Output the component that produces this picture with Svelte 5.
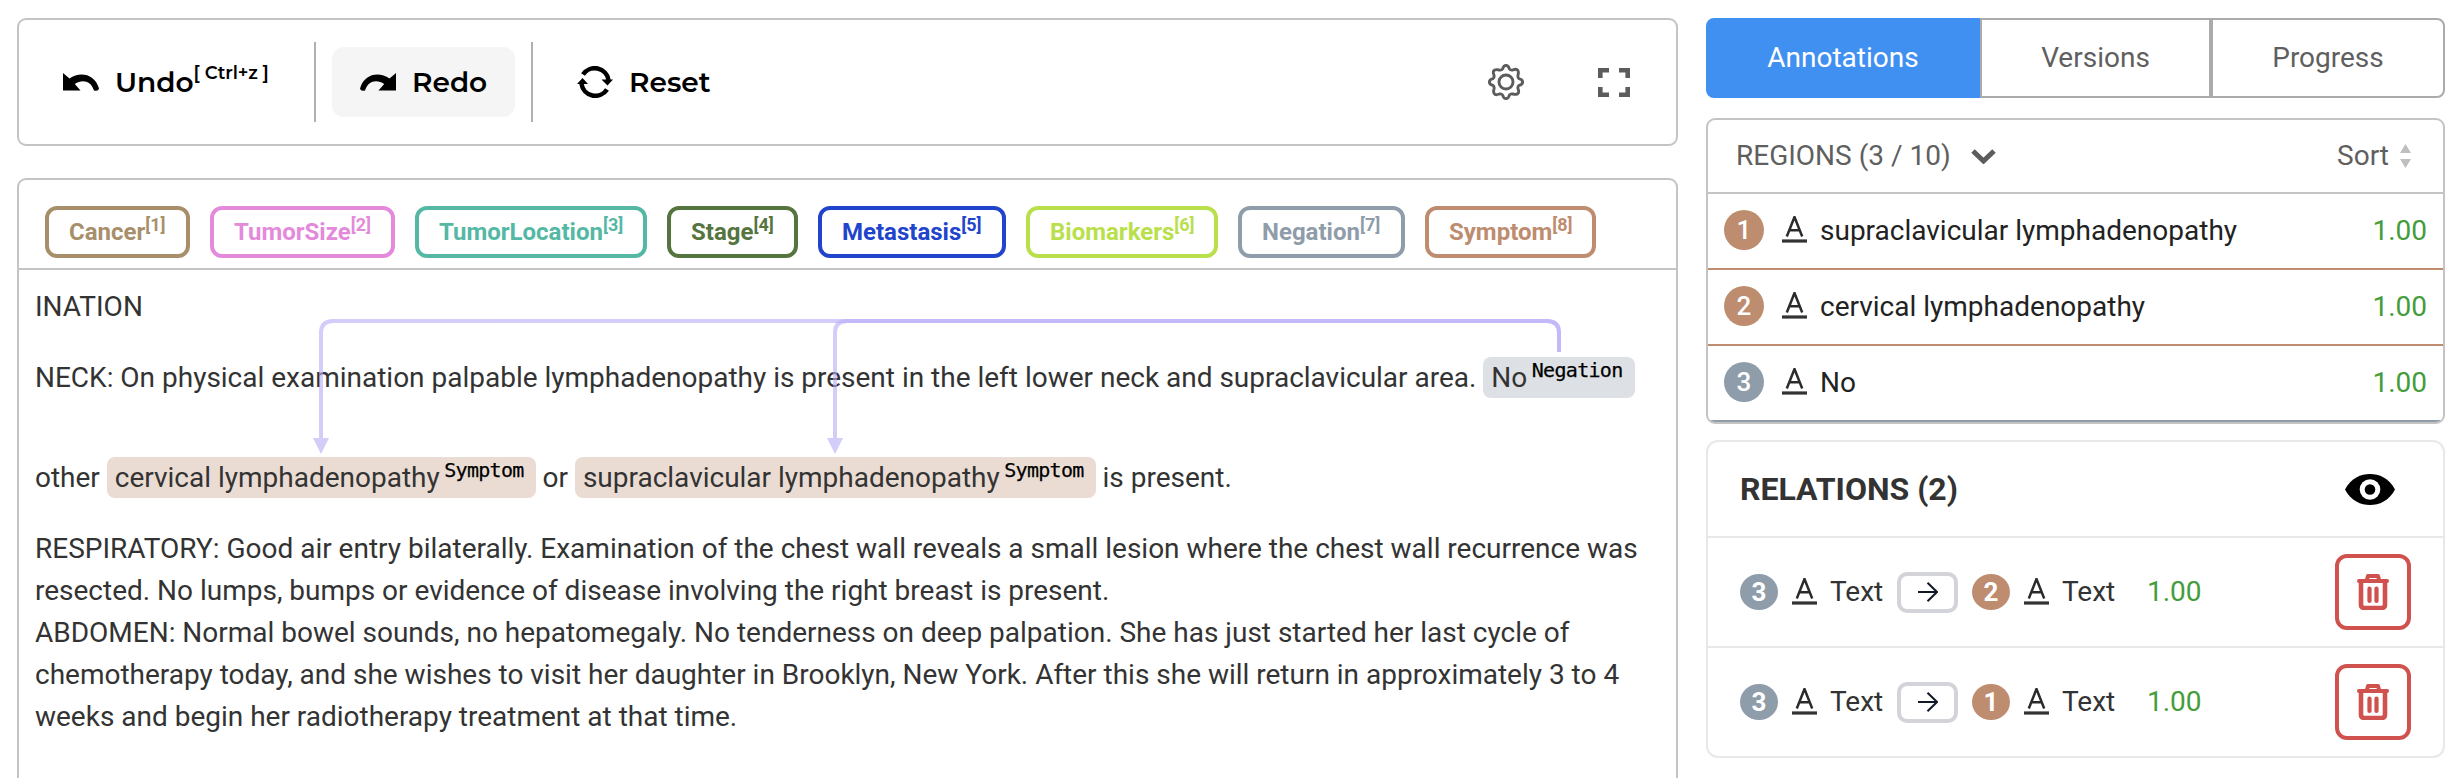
<script>
  const tan = '#be8c6f', slate = '#8f9ca9';
  const labels = [
    { name: 'Cancer', color: '#a88f6c', w: 145 },
    { name: 'TumorSize', color: '#e48adb', w: 185 },
    { name: 'TumorLocation', color: '#54b8a5', w: 232 },
    { name: 'Stage', color: '#557440', w: 131 },
    { name: 'Metastasis', color: '#2144cd', w: 188 },
    { name: 'Biomarkers', color: '#b9df4b', w: 192 },
    { name: 'Negation', color: slate, w: 167 },
    { name: 'Symptom', color: tan, w: 171 }
  ];
  const regions = [
    { text: 'supraclavicular lymphadenopathy', color: tan },
    { text: 'cervical lymphadenopathy', color: tan },
    { text: 'No', color: slate }
  ];
  const relations = [2, 1];
</script>

{#snippet letterA()}
  <svg class="la" width="25" height="28" viewBox="0 0 25 28">
    <path d="M4.8 20.5 L12.5 1 L20.2 20.5 M7.3 14.2 H17.7" fill="none" stroke="#2b2b2b" stroke-width="2.5" />
    <rect x="0" y="23.4" width="25" height="3.2" fill="#333" />
  </svg>
{/snippet}

<div class="page">
  <main>
    <div class="toolbar">
      <div class="tool undo">
        <svg width="36" height="20" viewBox="0 0 36 20"><path d="M0 1 L6.500 6.600 C17 -1 32 2 36 16.500 Q35.500 19.500 31 18.500 C28 8.500 19 6.800 11.800 12 L17.500 18.500 H0 Z" /></svg>
        <span class="tt">Undo</span><span class="key">[ Ctrl+z ]</span>
      </div>
      <div class="tool redo">
        <svg width="36" height="20" viewBox="0 0 36 20"><path transform="translate(36 0) scale(-1 1)" d="M0 1 L6.500 6.600 C17 -1 32 2 36 16.500 Q35.500 19.500 31 18.500 C28 8.500 19 6.800 11.800 12 L17.500 18.500 H0 Z" /></svg>
        <span class="tt">Redo</span>
      </div>
      <div class="tool reset">
        <svg width="36" height="32" viewBox="0 0 36 32">
          <path d="M6 8.500 A14 14 0 0 1 31.500 14 M30 23.500 A14 14 0 0 1 4.500 18" fill="none" stroke="#000" stroke-width="4.600" />
          <path d="M24.500 13.500 H36 L30.500 19.500 Z M0 18 L5.500 12 L11 18 Z" />
        </svg>
        <span class="tt">Reset</span>
      </div>
      <svg class="gear" width="36" height="36" viewBox="0 0 36 36" fill="none" stroke="#5c5c5c" stroke-width="2.900" stroke-linejoin="round">
        <circle cx="18" cy="18" r="7" />
        <path d="M14.600 5 Q15.500 1.400 18 1.400 T21.400 5 Q22.500 6.500 24.800 6 Q28.500 4.500 29.700 6.300 T30 11.200 Q29.500 13.500 31 14.600 Q34.600 15.500 34.600 18 T31 21.400 Q29.500 22.500 30 24.800 Q31.500 28.500 29.700 29.700 T24.800 30 Q22.500 29.500 21.400 31 Q20.500 34.600 18 34.600 T14.600 31 Q13.500 29.500 11.200 30 Q7.500 31.500 6.300 29.700 T6 24.800 Q6.500 22.500 5 21.400 Q1.400 20.500 1.400 18 T5 14.600 Q6.500 13.500 6 11.200 Q4.500 7.500 6.300 6.300 T11.200 6 Q13.500 6.500 14.600 5 Z" />
      </svg>
      <svg class="full" width="32" height="29" viewBox="0 0 32 29" fill="none" stroke="#5c5c5c" stroke-width="4.600"><path d="M2.300 10 V2.300 H11 M21 2.300 H29.700 V10 M29.700 19 V26.700 H21 M11 26.700 H2.300 V19" /></svg>
    </div>

    <div class="editor">
      <div class="labels">
        {#each labels as l, i}
          <div class="label" style="color:{l.color};width:{l.w}px">{l.name}<span>[{i + 1}]</span></div>
        {/each}
      </div>
      <div class="doc">
        <p class="first">INATION</p>
        <p class="neck">NECK: On physical examination palpable lymphadenopathy is present in the left lower neck and supraclavicular area. <mark class="neg">No<span>Negation</span></mark></p>
        <p class="other">other <mark>cervical lymphadenopathy<span>Symptom</span></mark> or <mark>supraclavicular lymphadenopathy<span>Symptom</span></mark> is present.</p>
        <p>RESPIRATORY: Good air entry bilaterally. Examination of the chest wall reveals a small lesion where the chest wall recurrence was<br />resected. No lumps, bumps or evidence of disease involving the right breast is present.<br />ABDOMEN: Normal bowel sounds, no hepatomegaly. No tenderness on deep palpation. She has just started her last cycle of<br />chemotherapy today, and she wishes to visit her daughter in Brooklyn, New York. After this she will return in approximately 3 to 4<br />weeks and begin her radiotherapy treatment at that time.</p>
        <svg class="links" width="1657" height="200" viewBox="19 270 1657 200">
          {#each [321, 835] as x}
            <g opacity=".6">
              <path d="M{x} 440 V333 Q{x} 321 {x + 12} 321 H1547 Q1559 321 1559 333 V352" fill="none" stroke="#b7acf8" stroke-width="4" />
              <path d="M{x - 8} 438 H{x + 8} L{x} 454 Z" fill="#b7acf8" />
            </g>
          {/each}
        </svg>
      </div>
    </div>
  </main>

  <aside>
    <div class="tabs">
      <div class="tab on">Annotations</div>
      <div class="tab">Versions</div>
      <div class="tab last">Progress</div>
    </div>

    <section class="regions">
      <header>
        <span class="rt">REGIONS (3 / 10)</span>
        <svg width="25" height="15" viewBox="0 0 25 15"><path d="M2 2 L12.500 12 L23 2" fill="none" stroke="#5c5c5c" stroke-width="5" /></svg>
        <span class="sort">Sort</span>
        <svg width="11" height="24" viewBox="0 0 11 24"><path d="M0 9 L5.500 0 L11 9 Z M0 15 H11 L5.500 24 Z" fill="#bfbfbf" /></svg>
      </header>
      {#each regions as r, i}
        <div class="row" style="border-color:{r.color}">
          <span class="num" style="background:{r.color}">{i + 1}</span>
          {@render letterA()}
          <span class="name">{r.text}</span>
          <span class="score">1.00</span>
        </div>
      {/each}
    </section>

    <section class="relations">
      <header>
        <b>RELATIONS (2)</b>
        <svg width="50" height="31" viewBox="0 0 50 31">
          <path d="M0 15.500 C6 4 16 0 25 0 C34 0 44 4 50 15.500 C44 27 34 31 25 31 C16 31 6 27 0 15.500 Z" />
          <circle cx="25" cy="15.500" r="10.300" fill="#fff" /><circle cx="25" cy="15.500" r="5.300" />
        </svg>
      </header>
      {#each relations as n}
        <div class="rel">
          <span class="dot slate">3</span>
          {@render letterA()}
          <span class="txt">Text</span>
          <span class="arrow"><svg width="20" height="20" viewBox="0 0 20 20"><path d="M0 10 H19 M9.500 .8 L19 10 L9.500 19.200" fill="none" stroke="#111827" stroke-width="2" /></svg></span>
          <span class="dot tan">{n}</span>
          {@render letterA()}
          <span class="txt">Text</span>
          <span class="score">1.00</span>
          <span class="trash"><svg width="32" height="36" viewBox="0 0 32 36" fill="none" stroke="#cf524e" stroke-linecap="round">
            <path d="M2 7 H30" stroke-width="4" /><path d="M10 5.500 L11 2 H21 L22 5.500" stroke-width="4" stroke-linejoin="round" />
            <path d="M4 8 V30.500 Q4 34 7.500 34 H24.500 Q28 34 28 30.500 V8" stroke-width="4.600" /><path d="M12.500 14.500 V27 M19.500 14.500 V27" stroke-width="4.200" />
          </svg></span>
        </div>
      {/each}
    </section>
  </aside>
</div>

<style>
  :global(body) { background: #fff; overflow: hidden; }
  * { box-sizing: border-box; }
  svg { display: block; flex: none; }
  .page { display: flex; gap: 28px; height: 778px; padding: 18px 18px 0 17px; font-family: Roboto, sans-serif; font-size: 28px; color: #333; overflow: hidden; }
  main { width: 1661px; flex: none; }
  .toolbar { height: 128px; border: 2px solid #c4c4c4; border-radius: 9px; display: flex; align-items: center; margin-bottom: 32px; font-family: Montserrat, Inter, sans-serif; font-weight: 600; color: #000; }
  .tool { display: flex; align-items: center; height: 70px; white-space: nowrap; }
  .tt { line-height: 34px; }
  .undo { width: 297px; height: 80px; border-right: 2px solid #b0b0b0; padding-left: 44px; }
  .undo svg { margin-right: 16px; }
  .key { font-size: 18px; letter-spacing: -.05px; margin: -19px 0 0 0; }
  .redo { width: 183px; margin: 0 16px; background: #f5f5f5; border-radius: 12px; padding-left: 28px; }
  .redo svg { margin-right: 16px; }
  .reset { height: 80px; border-left: 2px solid #b0b0b0; padding-left: 44px; }
  .reset svg { margin-right: 16px; }
  .gear { margin-left: auto; margin-right: 74px; }
  .full { margin-right: 46px; }

  .editor { height: 640px; border: 2px solid #c4c4c4; border-radius: 9px; }
  .labels { height: 90px; border-bottom: 2px solid #c4c4c4; display: flex; gap: 20px; padding: 26px 0 0 26px; }
  .label { height: 52px; flex: none; border: 4px solid currentColor; border-radius: 12px; padding-left: 20px; font-weight: 700; font-size: 24px; line-height: 44px; white-space: nowrap; }
  .label span { font-size: 18px; position: relative; top: -9px; line-height: 0; }
  .doc { position: relative; padding: 16px 0 0 16px; white-space: nowrap; letter-spacing: -.008px; }
  p { margin: 0; line-height: 42px; }
  .first { height: 71px; }
  .neck { height: 100px; }
  .other { height: 71px; }
  mark { display: inline-block; height: 41px; line-height: 41px; padding: 0 12px 0 8px; border-radius: 8px; background: #ebdcd3; color: inherit; vertical-align: top; }
  mark.neg { background: #dde0e5; }
  mark span { font: 20px 'DejaVu Sans Mono', monospace; line-height: 0; color: #000; margin-left: 4.5px; letter-spacing: -.7px; position: relative; top: -10px; -webkit-text-stroke: .25px #000; }
  .links { position: absolute; left: 0; top: 0; }

  aside { width: 739px; flex: none; }
  .tabs { display: flex; height: 80px; margin-bottom: 20px; line-height: 76px; text-align: center; color: #5f5f5f; }
  .tab { width: 231px; border: 2px solid #ababab; }
  .tab.on { width: 274px; background: #4090f1; border-color: #4090f1; color: #fff; border-radius: 8px 0 0 8px; }
  .tab.last { width: 234px; border-radius: 0 8px 8px 0; }
  .regions { border: 2px solid #c4c4c4; border-radius: 9px; height: 306px; margin-bottom: 16px; overflow: hidden; }
  .regions header { height: 74px; border-bottom: 2px solid #c4c4c4; display: flex; align-items: center; padding: 0 32px 2px 28px; color: #5f5f5f; }
  .regions header svg { margin-top: 2px; }
  .rt { width: 235px; }
  .sort { margin: 0 11px 0 auto; }
  .row { height: 76px; border-bottom: 2px solid; display: flex; align-items: center; padding: 0 16px 2px 16px; color: #222; }
  .num { width: 40px; height: 40px; border-radius: 50%; color: #fff; font-size: 26px; font-weight: 500; line-height: 41px; text-align: center; margin: 0 18px 0 0; }
  .name { margin-left: 13px; }
  .score { color: #449d3a; }
  .row .score { margin-left: auto; }
  .relations { border: 2px solid #e8e8e8; border-radius: 12px; height: 318px; }
  .relations header { height: 94px; display: flex; align-items: center; justify-content: space-between; padding: 0 48px 0 32px; font-size: 32px; }
  .rel { height: 110px; border-top: 2px solid #e8e8e8; display: flex; align-items: center; padding: 0 32px 0 32px; }
  .dot { width: 38px; height: 36px; border-radius: 50%; color: #fff; font-weight: 700; font-size: 26px; line-height: 36px; text-align: center; margin-right: 14px; }
  .slate { background: #8f9ca9; }
  .tan { background: #be8c6f; }
  .txt { width: 52px; margin: -2px 0 0 13px; white-space: nowrap; }
  .arrow { width: 61px; height: 41px; border: 4px solid #d3d4da; border-radius: 10px; margin: 0 14px 0 15px; display: flex; align-items: center; justify-content: center; }
  .rel .score { margin: -2px 0 0 33px; }
  .trash { width: 76px; height: 76px; border: 4px solid #cf524e; border-radius: 12px; margin-left: auto; display: flex; align-items: center; justify-content: center; }
</style>
